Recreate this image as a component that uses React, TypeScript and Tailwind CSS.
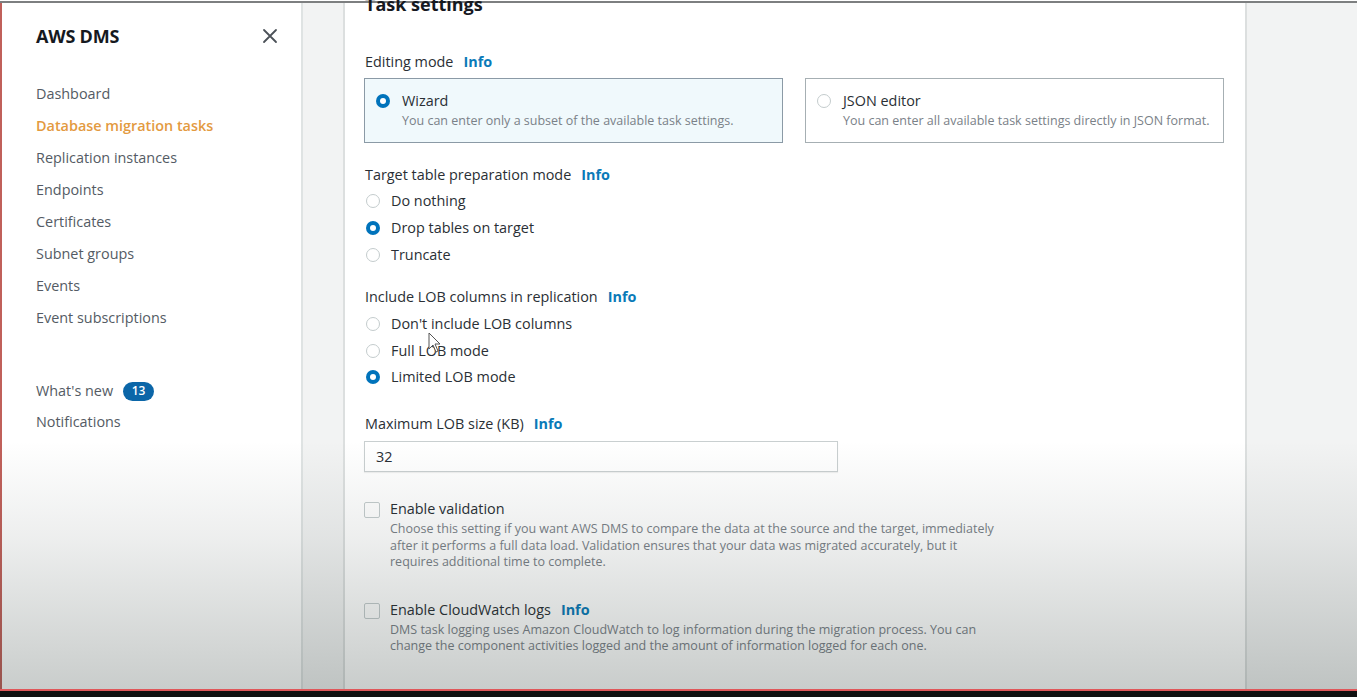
import React from "react";

const font = { fontFamily: '"Open Sans", "Liberation Sans", sans-serif' };

function Radio({ checked }: { checked?: boolean }) {
  return checked ? (
    <span className="inline-flex h-[14px] w-[14px] shrink-0 items-center justify-center rounded-full bg-[#0073bb]">
      <span className="h-[6px] w-[6px] rounded-full bg-white" />
    </span>
  ) : (
    <span className="inline-block h-[14px] w-[14px] shrink-0 rounded-full border-[1.5px] border-[#c4cccd] bg-white" />
  );
}

function Info() {
  return <span className="ml-[10px] font-bold text-[#0a7ab8]">Info</span>;
}

function RadioRow({ label, checked, h }: { label: string; checked?: boolean; h: string }) {
  return (
    <div className={`flex items-center ${h}`}>
      <span className="ml-[1px] mr-[11px] flex">
        <Radio checked={checked} />
      </span>
      <span className="text-[14.4px] text-[#2a2f35]">{label}</span>
    </div>
  );
}

function Checkbox() {
  return <span className="mt-[3px] inline-block h-[16px] w-[16px] shrink-0 rounded-[2px] border-[1.5px] border-[#c4cccd] bg-white" />;
}

const nav = [
  "Dashboard",
  "Database migration tasks",
  "Replication instances",
  "Endpoints",
  "Certificates",
  "Subnet groups",
  "Events",
  "Event subscriptions",
];

export default function App() {
  return (
    <div className="relative flex h-[697px] w-[1357px] flex-col overflow-hidden bg-black" style={font}>
      <div className="flex h-[689px] flex-col bg-white">
        <div className="h-[1px] bg-white" />
        <div className="h-[2px] bg-[#7d7f80]" />
        <div className="flex min-h-0 flex-1">
          <div className="w-[2px] bg-[#c0605a]" />
          {/* Sidebar */}
          <div className="w-[301px] border-r-[2px] border-[#dfe3e3] bg-white pl-[34px]">
            <div className="mt-[19px] flex h-[28px] items-center justify-between pr-[22px]">
              <span className="text-[18px] font-bold tracking-[-0.2px] text-[#16191f]">AWS DMS</span>
              <svg width="16" height="16" viewBox="0 0 16 16" className="mr-[1px]">
                <path d="M2 2 L14 14 M14 2 L2 14" stroke="#4b5158" strokeWidth="1.8" strokeLinecap="round" />
              </svg>
            </div>
            <div className="mt-[28px] flex flex-col">
              {nav.map((n, i) => (
                <div
                  key={n}
                  className={`flex h-[32px] items-center text-[14.4px] ${
                    i === 1 ? "font-semibold text-[#e39a3f]" : "text-[#545b64]"
                  }`}
                >
                  {n}
                </div>
              ))}
            </div>
            <div className="mt-[41px] flex h-[32px] items-center text-[14.4px] text-[#545b64]">
              What's new
              <span className="ml-[10px] inline-flex h-[19px] w-[31px] items-center justify-center rounded-full bg-[#0b66a8] text-[12px] font-semibold text-white">
                13
              </span>
            </div>
            <div className="flex h-[30px] items-center text-[14.4px] text-[#545b64]">Notifications</div>
          </div>
          {/* gutter */}
          <div className="w-[42px] border-r-[2px] border-[#dcdfdf] bg-[#f2f3f3]" />
          {/* Content panel */}
          <div className="relative w-[902px] border-r-[2px] border-[#dcdfdf] bg-white pl-[20px]">
            <div className="-mt-[13px] h-[28px] text-[18px] font-bold leading-[28px] text-[#16191f]">Task settings</div>
            <div className="mt-[32px] flex h-[24px] items-center text-[14.4px] text-[#2a2f35]">
              Editing mode
              <Info />
            </div>
            <div className="-ml-[1px] mt-[4px] flex gap-[22px]">
              <div className="h-[65px] w-[419px] border border-[#8b9aa6] bg-[#f0f9fc] pl-[11px] pt-[12px]">
                <div className="flex h-[20px] items-center">
                  <Radio checked />
                  <span className="ml-[12px] text-[14.4px] text-[#2a2f35]">Wizard</span>
                </div>
                <div className="ml-[26px] mt-[2px] text-[12.5px] leading-[16px] text-[#7a8188]">
                  You can enter only a subset of the available task settings.
                </div>
              </div>
              <div className="h-[65px] w-[419px] border border-[#a6afb3] bg-white pl-[11px] pt-[12px]">
                <div className="flex h-[20px] items-center">
                  <Radio />
                  <span className="ml-[12px] text-[14.4px] text-[#2a2f35]">JSON editor</span>
                </div>
                <div className="ml-[26px] mt-[2px] text-[12.5px] leading-[16px] text-[#7a8188]">
                  You can enter all available task settings directly in JSON format.
                </div>
              </div>
            </div>

            <div className="mt-[20px] flex h-[24px] items-center text-[14.4px] text-[#2a2f35]">
              Target table preparation mode
              <Info />
            </div>
            <div>
              <RadioRow h="h-[27px]" label="Do nothing" />
              <RadioRow h="h-[27px]" label="Drop tables on target" checked />
              <RadioRow h="h-[27px]" label="Truncate" />
            </div>

            <div className="mt-[17px] flex h-[24px] items-center text-[14.4px] text-[#2a2f35]">
              Include LOB columns in replication
              <Info />
            </div>
            <div className="mt-[2px]">
              <RadioRow h="h-[26.5px]" label="Don't include LOB columns" />
              <RadioRow h="h-[26.5px]" label="Full LOB mode" />
              <RadioRow h="h-[26.5px]" label="Limited LOB mode" checked />
            </div>

            <div className="mt-[21.5px] flex h-[24px] items-center text-[14.4px] text-[#2a2f35]">
              Maximum LOB size (KB)
              <Info />
            </div>
            <div className="-ml-[1px] mt-[5px] flex h-[31px] w-[474px] items-center border border-[#c9cfd0] bg-white pl-[11px] text-[14.4px] text-[#2a2f35] shadow-[0_1px_1px_rgba(0,0,0,0.06)]">
              32
            </div>

            <div className="-ml-[1px] mt-[27px] flex">
              <Checkbox />
              <div className="ml-[10px]">
                <div className="text-[14.4px] leading-[20px] text-[#2a2f35]">Enable validation</div>
                <div className="mt-[2px] w-[608px] text-[12.5px] leading-[16.5px] text-[#7a8188]">
                  Choose this setting if you want AWS DMS to compare the data at the source and the target, immediately after it performs a full data load. Validation ensures that your data was migrated accurately, but it requires additional time to complete.
                </div>
              </div>
            </div>

            <div className="-ml-[1px] mt-[29px] flex">
              <Checkbox />
              <div className="ml-[10px]">
                <div className="flex items-center text-[14.4px] leading-[20px] text-[#2a2f35]">
                  Enable CloudWatch logs
                  <Info />
                </div>
                <div className="mt-[2px] w-[600px] text-[12.5px] leading-[16px] text-[#7a8188]">
                  DMS task logging uses Amazon CloudWatch to log information during the migration process. You can change the component activities logged and the amount of information logged for each one.
                </div>
              </div>
            </div>

            {/* mouse cursor */}
            <svg className="absolute left-[83px] top-[329px]" width="14" height="22" viewBox="0 0 14 22">
              <path d="M1 1 L1 17 L5 13 L8 20 L10 19 L7 12 L12 12 Z" fill="white" stroke="#555" strokeWidth="1" strokeLinejoin="round" />
            </svg>
          </div>
          <div className="flex-1 bg-[#f2f3f3]" />
        </div>
      </div>
      <div className="h-[2px] bg-[#e0575a]" />
      <div className="flex-1 bg-[#111]" />
      {/* video vignette */}
      <div className="pointer-events-none absolute left-0 top-0 h-[689px] w-full bg-[linear-gradient(to_bottom,rgba(0,0,0,0)_0%,rgba(0,0,0,0)_64%,rgba(30,45,40,0.08)_78%,rgba(30,45,40,0.24)_100%)]" />
    </div>
  );
}
